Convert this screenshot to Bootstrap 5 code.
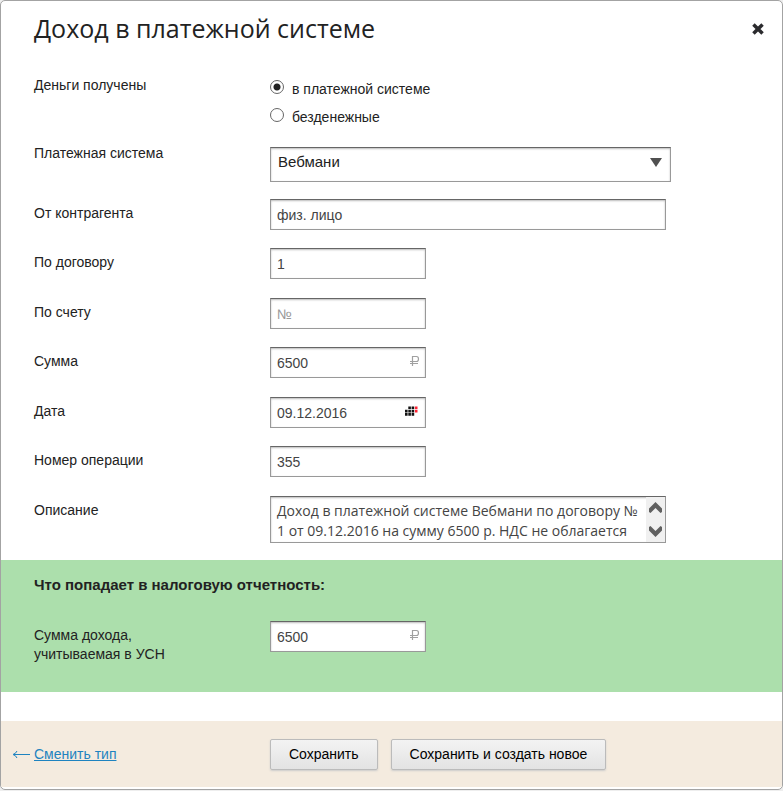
<!DOCTYPE html>
<html lang="ru">
<head>
<meta charset="utf-8">
<meta name="viewport" content="width=device-width, initial-scale=1">
<title>Доход в платежной системе</title>
<link rel="stylesheet" href="https://cdn.jsdelivr.net/npm/bootstrap@5.3.0/dist/css/bootstrap.min.css">
<style>
  body { background: #eee; color: #222; font: 14px/19px "Liberation Sans", Arial, sans-serif; }
  .dialog { background: #fff; border: 1px solid #a3a3a3; border-radius: 5px; padding-bottom: 2px; }
  .dialog-head { padding: 9px 16px 0 33px; }
  .dialog-title { font: 25px/36px "Open Sans", "Segoe UI", sans-serif; }
  .dialog-close { width: 16px; height: 16px; margin-top: 2px; }
  .fields { padding: 30px 33px 17px; }
  .field-label { width: 236px; flex: none; padding-top: 5px; }
  .field { margin-bottom: 19px; }
  .field:nth-child(odd) { margin-bottom: 18px; }
  .field-radio .field-label, .field-system .field-label { padding-top: 0; }
  .field-system .field-label { line-height: 13px; }
  .field-radio.field { margin-bottom: 15px; }
  .field-system.field { margin-bottom: 17px; }
  .choice { height: 28px; }
  .choice .form-check-input { width: 14px; height: 14px; margin: 4px 8px 0 0; float: none; border: 1px solid #666; box-shadow: none; }
  .choice .form-check-input:checked { background: #fff radial-gradient(circle, #222 0 3px, transparent 4px); }
  .choice label { line-height: 20px; padding-top: 3px; }
  .control, .control:focus {
    height: 31px; padding: 3px 6px 2px; border: 1px solid #999; border-top-color: #666; border-radius: 0;
    background-color: #fff; color: #444; font-size: 14px; line-height: 19px; box-shadow: inset 0 1px 2px #bbb;
  }
  .control::placeholder { color: #999; }
  .w-short { width: 156px; }
  .w-long { width: 396px; max-width: 100%; }
  .system-box { width: 401px; max-width: 100%; }
  .system-box .control { height: 35px; padding: 0 28px 7px 7px; font-size: 15px; color: #222; background-image: none; }
  .system-arrow { right: 9px; top: 11px; pointer-events: none; }
  .field-icon { right: 5px; top: 8px; pointer-events: none; }
  .note-box { height: 47px; padding: 0; }
  .note-box textarea { font: 14px/20px "Open Sans", "Segoe UI", sans-serif; color: #444; padding: 4px 0 0 6px; resize: none; overflow: hidden; outline: 0; }
  .note-scroll { width: 19px; background: #f0f0f0; }
  .tax { background: #acdfac; padding: 15px 33px 28px; }
  .tax-title { font-size: 15px; line-height: 20px; margin-bottom: 26px; }
  .dialog-foot { background: #f4ebdf; margin-top: 29px; padding: 18px 33px 17px 11px; }
  .back { width: 258px; flex: none; color: #1e83c0; }
  .back a { color: #1e83c0; }
  .push-row { gap: 13px; }
  .push, .push:hover {
    height: 31px; padding: 0 18px; border: 1px solid #bbb; border-radius: 2px; color: #000; font-size: 14px; line-height: 29px;
    background: linear-gradient(#f3f3f3, #e3e3e3); box-shadow: 0 1px 2px #ccc;
  }
</style>
<script src="https://cdn.jsdelivr.net/npm/bootstrap@5.3.0/dist/js/bootstrap.bundle.min.js"></script>
</head>
<body>
<form class="dialog overflow-hidden">
  <header class="dialog-head d-flex justify-content-between align-items-center">
    <h1 class="dialog-title m-0">Доход в платежной системе</h1>
    <button type="button" class="dialog-close btn p-0 border-0 d-flex align-items-center justify-content-center" aria-label="Закрыть">
      <svg width="12" height="12" viewBox="0 0 12 12"><path d="M2.7 2.7l6.6 6.6M9.3 2.7L2.7 9.3" stroke="#2b2b2e" stroke-width="3.5" stroke-linecap="square"/></svg>
    </button>
  </header>

  <div class="fields">
    <div class="field field-radio d-flex" role="radiogroup" aria-labelledby="got">
      <div class="field-label" id="got">Деньги получены</div>
      <div>
        <div class="choice d-flex">
          <input class="form-check-input" type="radio" name="got" id="got-system" checked>
          <label for="got-system">в платежной системе</label>
        </div>
        <div class="choice d-flex">
          <input class="form-check-input" type="radio" name="got" id="got-none">
          <label for="got-none">безденежные</label>
        </div>
      </div>
    </div>
    <div class="field field-system d-flex">
      <label class="field-label" for="system">Платежная система</label>
      <div class="system-box position-relative">
        <select class="form-select control" id="system"><option>Вебмани</option></select>
        <svg class="system-arrow position-absolute" width="12" height="9" viewBox="0 0 12 9"><path d="M0 0h12L6 9z" fill="#505050"/></svg>
      </div>
    </div>
    <div class="field d-flex">
      <label class="field-label" for="payer">От контрагента</label>
      <input class="form-control control w-long" id="payer" type="text" value="физ. лицо">
    </div>
    <div class="field d-flex">
      <label class="field-label" for="contract">По договору</label>
      <input class="form-control control w-short" id="contract" type="text" value="1">
    </div>
    <div class="field d-flex">
      <label class="field-label" for="invoice">По счету</label>
      <input class="form-control control w-short" id="invoice" type="text" placeholder="№">
    </div>
    <div class="field d-flex">
      <label class="field-label" for="sum">Сумма</label>
      <div class="w-short position-relative">
        <input class="form-control control" id="sum" type="text" value="6500">
        <svg class="field-icon position-absolute" width="12" height="12" viewBox="0 0 12 12"><path d="M3.500 11V1.500h4q2 0 2 2.500t-2 2.500H1M1 8.500h8" fill="none" stroke="#a0a0a0" stroke-width="1.200"/></svg>
      </div>
    </div>
    <div class="field d-flex">
      <label class="field-label" for="date">Дата</label>
      <div class="w-short position-relative">
        <input class="form-control control" id="date" type="text" value="09.12.2016">
        <svg class="field-icon position-absolute" width="16" height="12" viewBox="0 0 16 12">
          <path d="M3.300 1.500h2.600v2.600H3.300zM6.600 1.500h2.600v2.600H6.600zM0 4.800h2.600v2.600H0zM3.300 4.800h2.600v2.600H3.300zM6.600 4.800h2.600v2.600H6.600zM0 8.100h2.600v2.600H0zM3.300 8.100h2.600v2.600H3.300zM6.600 8.100h2.600v2.600H6.600z" fill="#111"/>
          <path d="M9.900 1.500h2.600v2.600H9.900zM9.900 4.800h2.600v2.600H9.900z" fill="#f23"/>
        </svg>
      </div>
    </div>
    <div class="field d-flex">
      <label class="field-label" for="number">Номер операции</label>
      <input class="form-control control w-short" id="number" type="text" value="355">
    </div>
    <div class="field d-flex mb-0">
      <label class="field-label" for="note">Описание</label>
      <div class="control note-box w-long d-flex">
        <textarea class="flex-grow-1 border-0 bg-transparent" id="note">Доход в платежной системе Вебмани по договору № 1 от 09.12.2016 на сумму 6500 р. НДС не облагается</textarea>
        <div class="note-scroll d-flex flex-column justify-content-between">
          <button type="button" class="btn border-0 p-0 d-flex justify-content-center pt-1" aria-label="Вверх"><svg width="13" height="14" viewBox="0 0 13 14"><path d="M0 11V7.500L6.500 1 13 7.500V11L11.500 12 6.500 7l-5 5z" fill="#606060"/></svg></button>
          <button type="button" class="btn border-0 p-0 d-flex justify-content-center pb-1" aria-label="Вниз"><svg width="13" height="14" viewBox="0 0 13 14"><path d="M0 3v3.500L6.500 13 13 6.500V3L11.500 2l-5 5-5-5z" fill="#606060"/></svg></button>
        </div>
      </div>
    </div>
  </div>

  <section class="tax">
    <h2 class="tax-title fw-bold">Что попадает в налоговую отчетность:</h2>
    <div class="d-flex">
      <label class="field-label" for="income">Сумма дохода,<br>учитываемая в УСН</label>
      <div class="w-short position-relative">
        <input class="form-control control" id="income" type="text" value="6500">
        <svg class="field-icon position-absolute" width="12" height="12" viewBox="0 0 12 12"><path d="M3.500 11V1.500h4q2 0 2 2.500t-2 2.500H1M1 8.500h8" fill="none" stroke="#a0a0a0" stroke-width="1.200"/></svg>
      </div>
    </div>
  </section>

  <footer class="dialog-foot d-flex align-items-center">
    <div class="back d-flex align-items-center">
      <svg class="me-1" width="18" height="9" viewBox="0 0 18 9"><path d="M18 4.500H2M5 1Q4 3.500 1 4.500Q4 5.500 5 8" fill="none" stroke="#1e83c0"/></svg>
      <a href="#">Сменить тип</a>
    </div>
    <div class="push-row d-flex flex-wrap">
      <button type="submit" class="btn push">Сохранить</button>
      <button type="submit" class="btn push">Сохранить и создать новое</button>
    </div>
  </footer>
</form>
</body>
</html>
